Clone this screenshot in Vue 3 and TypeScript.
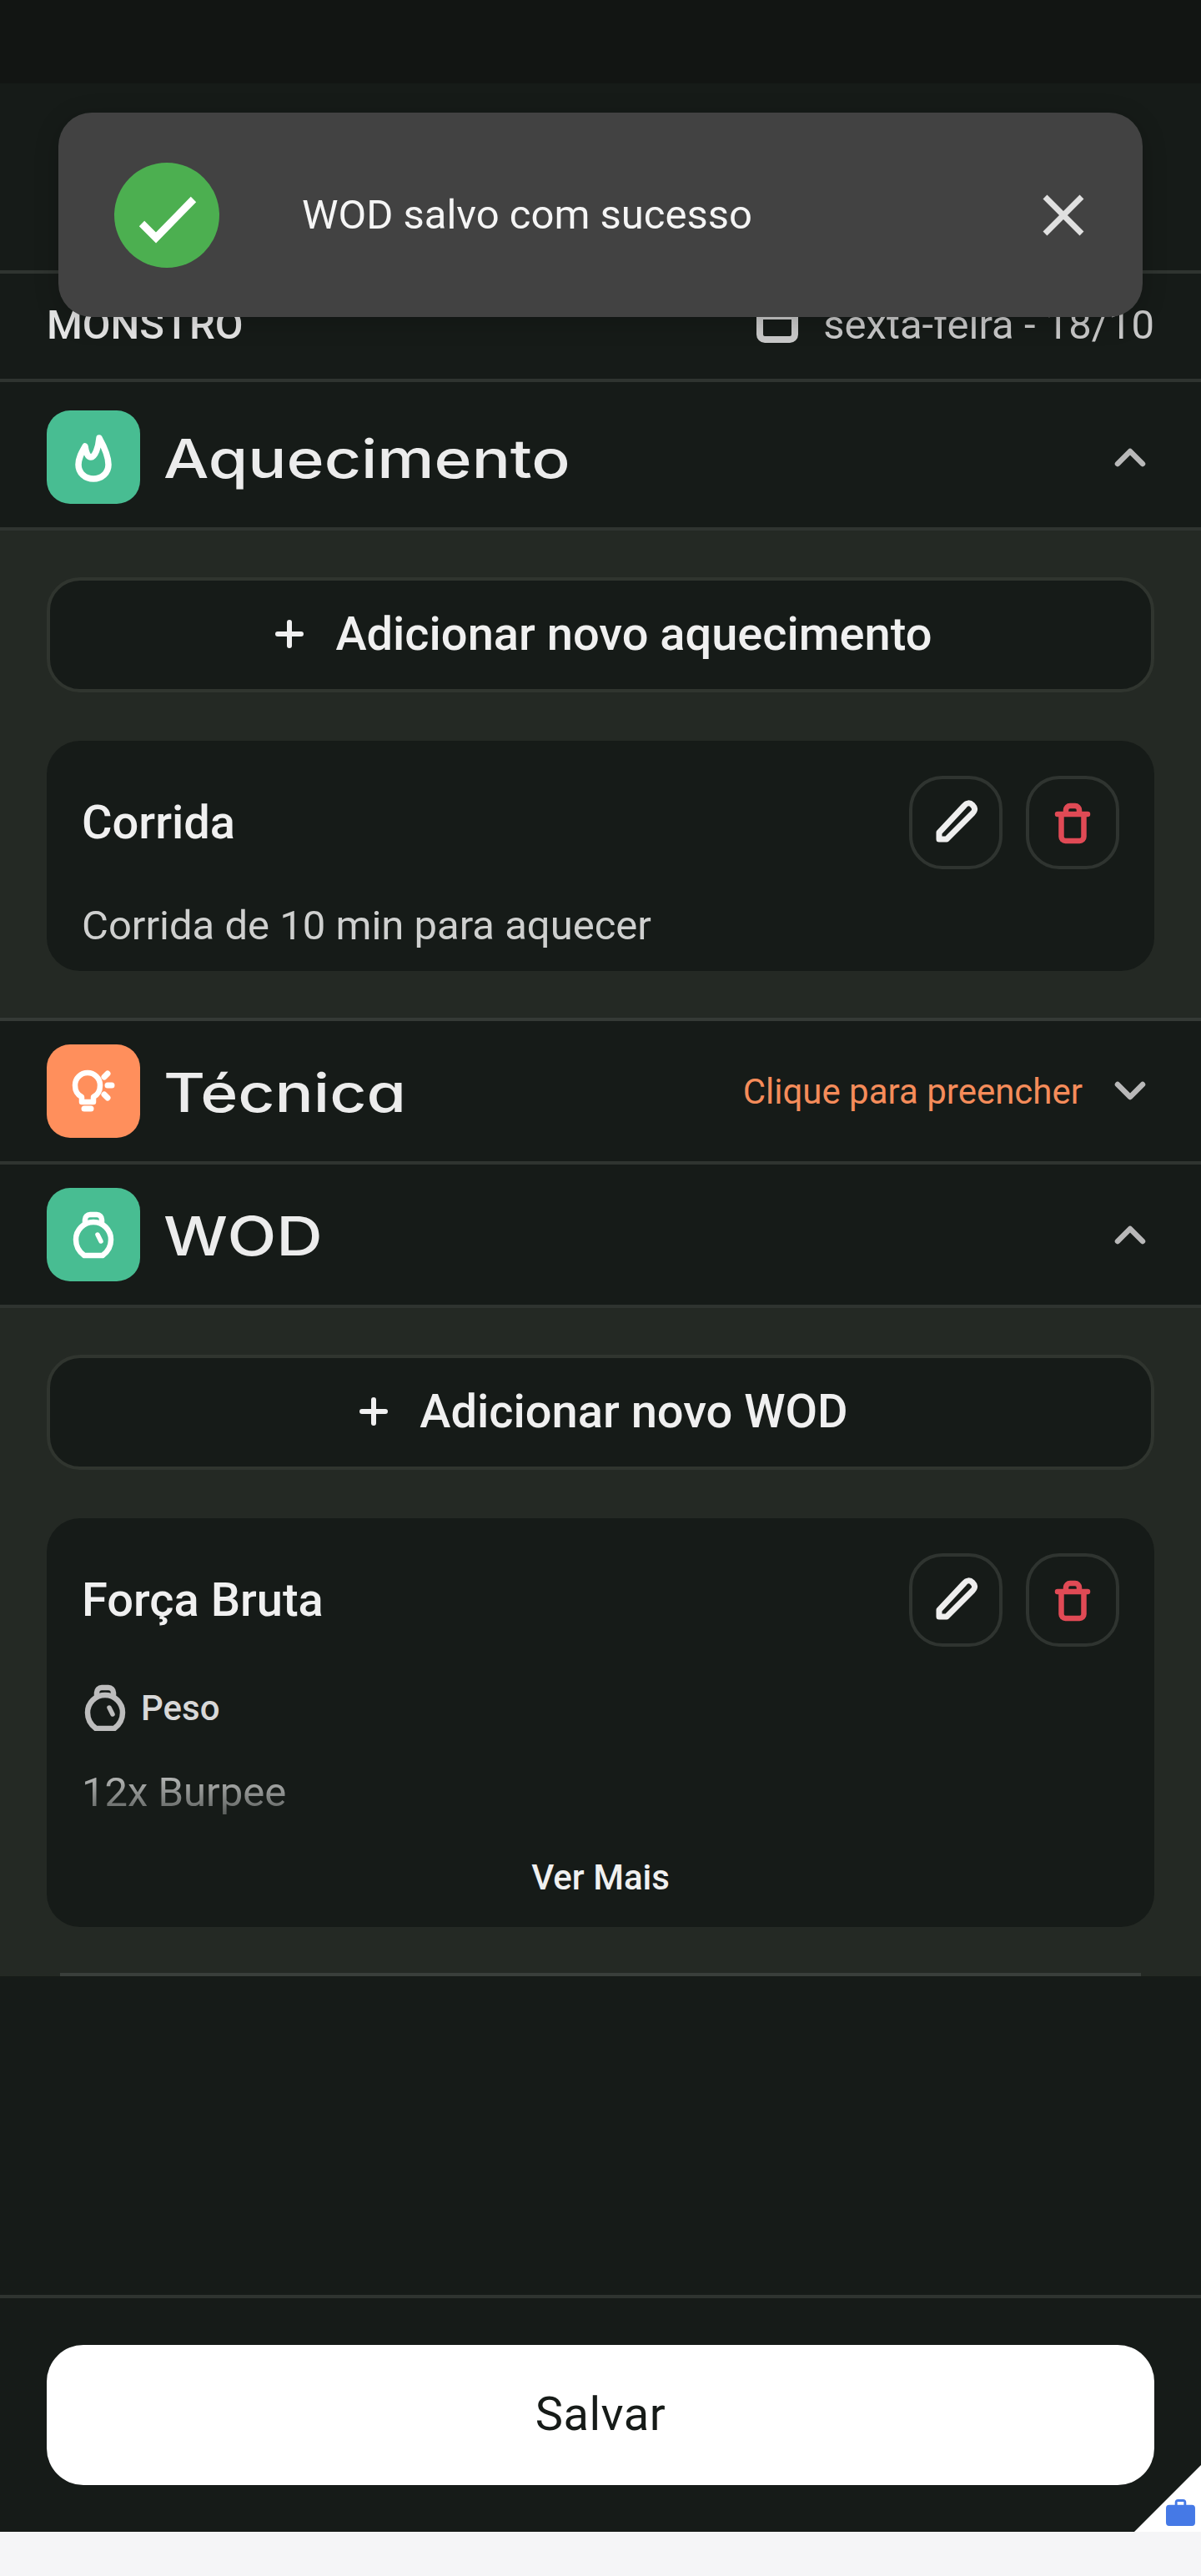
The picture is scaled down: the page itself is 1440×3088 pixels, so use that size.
<template>
  <div class="page">
    <div class="screen">
      <div class="status"></div>
      <div class="nav"></div>

      <div class="meta">
        <span class="meta-name">MONSTRO</span>
        <span class="meta-date">
          <svg class="cal" viewBox="0 0 50 56" fill="none" stroke="currentColor" stroke-width="8">
            <rect x="4" y="12" width="42" height="40" rx="6" />
            <path d="M3 24H47" />
          </svg>
          sexta-feira - 18/10
        </span>
      </div>

      <div class="section-head first">
        <div class="badge green">
          <svg viewBox="0 0 112 112" fill="none" stroke="#fff" stroke-width="7.500" stroke-linejoin="round">
            <path d="M46 43C47 50 49 56 53 56C58 56 62 44 63 33C68 42 74 54 74 65C74 75 66 82 56 82C46 82 38 75 38 65C38 57 42 50 46 43Z" />
          </svg>
        </div>
        <span class="section-title"><span class="wide">Aquecimento</span></span>
        <svg class="chev" viewBox="0 0 38 24" fill="none" stroke="currentColor" stroke-width="6.500" stroke-linecap="round" stroke-linejoin="round"><path d="M4 20L19 5L34 20" /></svg>
      </div>

      <div class="section-body ruled">
        <button class="add">
          <svg viewBox="0 0 34 34" fill="none" stroke="currentColor" stroke-width="6" stroke-linecap="round"><path d="M17 3V31M3 17H31" /></svg>
          Adicionar novo aquecimento
        </button>
        <div class="card">
          <div class="card-head">
            <span class="card-title">Corrida</span>
            <div class="card-actions">
              <button class="icon-btn">
                <svg viewBox="4 4 104 104" fill="none" stroke="#eee" stroke-width="7" stroke-linejoin="round"><path d="M36 68V76H45L76 45C80 41 79 38 76 35C73 32 69 32 66 36Z" /></svg>
              </button>
              <button class="icon-btn">
                <svg viewBox="4 4 104 104" fill="none" stroke="#e04a55" stroke-width="6.500" stroke-linecap="round"><path d="M48 46V41A5 5 0 0 1 53 36H59A5 5 0 0 1 64 41V46M38 46H74M42.500 46V73A5 5 0 0 0 47.500 78H64.500A5 5 0 0 0 69.500 73V46" /></svg>
              </button>
            </div>
          </div>
          <p class="card-desc">Corrida de 10 min para aquecer</p>
        </div>
      </div>

      <div class="section-head">
        <div class="badge orange">
          <svg viewBox="0 0 112 112" fill="none" stroke="#fff" stroke-width="6.500" stroke-linecap="round" stroke-linejoin="round">
            <path d="M42 69V63C36 60 34 55 34 49A15 15 0 0 1 64 49C64 55 62 60 56 63V69Z" />
            <path d="M45 77H53" stroke-width="7" />
            <path d="M69 39L73 35M73 49H78M69 60L73 64" stroke-width="7" />
          </svg>
        </div>
        <span class="section-title"><span class="wide">Técnica</span></span>
        <span class="hint">Clique para preencher</span>
        <svg class="chev" viewBox="0 0 38 24" fill="none" stroke="currentColor" stroke-width="6.500" stroke-linecap="round" stroke-linejoin="round"><path d="M4 4L19 19L34 4" /></svg>
      </div>

      <div class="section-head">
        <div class="badge green">
          <svg viewBox="0 0 112 112" fill="none" stroke="#fff" stroke-width="6.500" stroke-linejoin="round">
            <path d="M46 44V38A6 6 0 0 1 52 32H60A6 6 0 0 1 66 38V44" />
            <path d="M45 81C38 76 35 69 35 62A21 21 0 0 1 77 62C77 69 74 76 67 81Z" />
            <path d="M61 56L65 64" stroke-width="5.500" stroke-linecap="round" />
          </svg>
        </div>
        <span class="section-title"><span class="wide">WOD</span></span>
        <svg class="chev" viewBox="0 0 38 24" fill="none" stroke="currentColor" stroke-width="6.500" stroke-linecap="round" stroke-linejoin="round"><path d="M4 20L19 5L34 20" /></svg>
      </div>

      <div class="section-body last">
        <button class="add">
          <svg viewBox="0 0 34 34" fill="none" stroke="currentColor" stroke-width="6" stroke-linecap="round"><path d="M17 3V31M3 17H31" /></svg>
          Adicionar novo WOD
        </button>
        <div class="card tall">
          <div class="card-head">
            <span class="card-title">Força Bruta</span>
            <div class="card-actions">
              <button class="icon-btn">
                <svg viewBox="4 4 104 104" fill="none" stroke="#eee" stroke-width="7" stroke-linejoin="round"><path d="M36 68V76H45L76 45C80 41 79 38 76 35C73 32 69 32 66 36Z" /></svg>
              </button>
              <button class="icon-btn">
                <svg viewBox="4 4 104 104" fill="none" stroke="#e04a55" stroke-width="6.500" stroke-linecap="round"><path d="M48 46V41A5 5 0 0 1 53 36H59A5 5 0 0 1 64 41V46M38 46H74M42.500 46V73A5 5 0 0 0 47.500 78H64.500A5 5 0 0 0 69.500 73V46" /></svg>
              </button>
            </div>
          </div>
          <div class="clip">
            <div class="tag">
              <svg viewBox="28 28 56 56" fill="none" stroke="#bdbdbd" stroke-width="6.500" stroke-linejoin="round">
                <path d="M46 44V38A6 6 0 0 1 52 32H60A6 6 0 0 1 66 38V44" />
                <path d="M45 81C38 76 35 69 35 62A21 21 0 0 1 77 62C77 69 74 76 67 81Z" />
                <path d="M61 56L65 64" stroke-width="5.500" stroke-linecap="round" />
              </svg>
              Peso
            </div>
            <p class="card-desc burpee">12x Burpee</p>
          </div>
          <div class="more">Ver Mais</div>
        </div>
        <div class="inset-rule"></div>
      </div>

      <div class="spacer"></div>

      <div class="footer">
        <button class="save">Salvar</button>
      </div>
    </div>

    <div class="toast">
      <div class="toast-check">
        <svg viewBox="0 0 126 126" fill="none" stroke="#fff" stroke-width="9"><path d="M33 73L50 90L95 44" /></svg>
      </div>
      <span class="toast-text">WOD salvo com sucesso</span>
      <svg class="toast-close" viewBox="0 0 50 50" fill="none" stroke="#e0e0e0" stroke-width="7"><path d="M3 3L47 47M47 3L3 47" /></svg>
    </div>

    <div class="corner">
      <svg viewBox="0 0 36 34" fill="#4579e6">
        <path d="M11 8V5A4 4 0 0 1 15 1H21A4 4 0 0 1 25 5V8H32A4 4 0 0 1 36 12V30A4 4 0 0 1 32 34H4A4 4 0 0 1 0 30V12A4 4 0 0 1 4 8ZM14 8H22V4H14Z" fill-rule="evenodd" />
      </svg>
    </div>
  </div>
</template>

<script setup lang="ts">
</script>

<style>
html,
body {
  margin: 0;
  background: #f5f5f7;
}
</style>

<style scoped>
.page {
  position: relative;
  width: 1440px;
  height: 3088px;
  overflow: hidden;
  background: #f5f5f7;
  font-family: Roboto, "Liberation Sans", sans-serif;
  color: #f0f0f0;
}

.screen {
  display: flex;
  flex-direction: column;
  height: 3035px;
  background: #161b18;
}

.status {
  height: 100px;
  background: #121513;
}

.nav {
  height: 228px;
  box-sizing: border-box;
  border-bottom: 4px solid #2f3430;
}

.meta {
  display: flex;
  align-items: center;
  justify-content: space-between;
  box-sizing: border-box;
  height: 130px;
  padding: 0 56px 4px;
  border-bottom: 4px solid #2f3430;
}

.meta-name {
  font-size: 49px;
  font-weight: 500;
  color: #e6e6e6;
}

.meta-date {
  display: flex;
  align-items: center;
  gap: 30px;
  font-size: 49px;
  color: #c9c9c9;
}

.cal {
  width: 50px;
  height: 56px;
  margin-bottom: 12px;
}

.section-head {
  display: flex;
  align-items: center;
  box-sizing: border-box;
  height: 172px;
  padding: 0 66px 0 56px;
  border-bottom: 4px solid #2f3430;
}

.section-head.first {
  height: 178px;
  padding-top: 6px;
}

.badge {
  flex: none;
  width: 112px;
  height: 112px;
  border-radius: 28px;
}

.badge svg {
  display: block;
  width: 112px;
  height: 112px;
}

.badge.green {
  background: #48bd92;
}

.badge.orange {
  background: #ff8f5c;
}

.section-title {
  flex: 1;
  margin: 3px 0 0 28px;
}

.wide {
  display: inline-block;
  font-family: Inter, sans-serif;
  font-size: 64px;
  font-weight: 500;
  font-feature-settings: "cv11";
  color: #ececec;
  transform: scaleX(1.2);
  transform-origin: left center;
}

.hint {
  margin-right: 38px;
  font-size: 42px;
  color: #f58c5a;
}

.chev {
  flex: none;
  width: 38px;
  height: 24px;
  color: #b8b8b8;
}

.section-body {
  display: flex;
  flex-direction: column;
  padding: 56px 56px 56px;
  background: #242924;
}

.section-body.ruled {
  border-bottom: 4px solid #353a36;
}

.section-body.last {
  position: relative;
  padding-bottom: 59px;
}

.add {
  display: flex;
  align-items: center;
  justify-content: center;
  gap: 38px;
  box-sizing: border-box;
  height: 138px;
  padding: 0 0 2px 8px;
  border: 4px solid #30352f;
  border-radius: 40px;
  background: #161b18;
  color: #f0f0f0;
  font-family: inherit;
  font-size: 56px;
  font-weight: 500;
}

.add svg {
  width: 34px;
  height: 34px;
}

.card {
  margin-top: 58px;
  padding: 42px 42px 26px;
  border-radius: 40px;
  background: #161b18;
}

.card.tall {
  padding-bottom: 29px;
}

.card-head {
  display: flex;
  align-items: center;
  justify-content: space-between;
}

.card-title {
  font-size: 56px;
  font-weight: 500;
  color: #f0f0f0;
}

.card-actions {
  display: flex;
  gap: 28px;
}

.icon-btn {
  display: block;
  box-sizing: border-box;
  width: 112px;
  height: 112px;
  padding: 0;
  border: 4px solid #2f3430;
  border-radius: 40px;
  background: transparent;
}

.icon-btn svg {
  display: block;
  width: 104px;
  height: 104px;
}

.card-desc {
  margin: 40px 0 0;
  font-size: 49px;
  line-height: 56px;
  color: #cfd0cf;
}

.clip {
  position: relative;
  height: 247px;
  overflow: hidden;
}

.clip::after {
  content: "";
  position: absolute;
  left: 0;
  right: 0;
  bottom: 0;
  height: 105px;
  background: linear-gradient(rgba(22, 27, 24, 0), #161b18 90%);
}

.tag {
  display: flex;
  align-items: center;
  gap: 15px;
  margin-top: 45px;
  font-size: 42px;
  font-weight: 500;
  color: #d8d8d8;
}

.tag svg {
  width: 56px;
  height: 56px;
}

.burpee {
  margin-top: 46px;
}

.more {
  height: 60px;
  font-size: 42px;
  font-weight: 500;
  line-height: 60px;
  text-align: center;
  color: #f0f0f0;
}

.inset-rule {
  position: absolute;
  left: 72px;
  right: 72px;
  bottom: 0;
  height: 4px;
  background: #3a3f3b;
}

.spacer {
  flex: 1;
}

.footer {
  padding: 56px;
  border-top: 4px solid #2f3430;
}

.save {
  display: block;
  width: 100%;
  height: 168px;
  padding: 0 0 2px;
  border: 0;
  border-radius: 44px;
  background: #fff;
  color: #161b18;
  font-family: inherit;
  font-size: 56px;
  letter-spacing: 0.5px;
}

.toast {
  position: absolute;
  left: 70px;
  top: 135px;
  display: flex;
  align-items: center;
  box-sizing: border-box;
  width: 1300px;
  height: 245px;
  padding: 0 70px 0 67px;
  border-radius: 40px;
  background: #424242;
  box-shadow: 0 6px 30px rgba(0, 0, 0, 0.2);
}

.toast-check {
  flex: none;
  width: 126px;
  height: 126px;
  border-radius: 50%;
  background: #4caf50;
}

.toast-check svg {
  display: block;
}

.toast-text {
  flex: 1;
  margin-left: 99px;
  font-size: 49px;
  color: #f5f5f5;
}

.toast-close {
  flex: none;
  width: 50px;
  height: 50px;
}

.corner {
  position: absolute;
  right: 0;
  top: 2955px;
  width: 80px;
  height: 80px;
  background: #fff;
  clip-path: polygon(100% 0, 100% 100%, 0 100%);
}

.corner svg {
  position: absolute;
  left: 38px;
  top: 40px;
  width: 35px;
  height: 33px;
}
</style>
